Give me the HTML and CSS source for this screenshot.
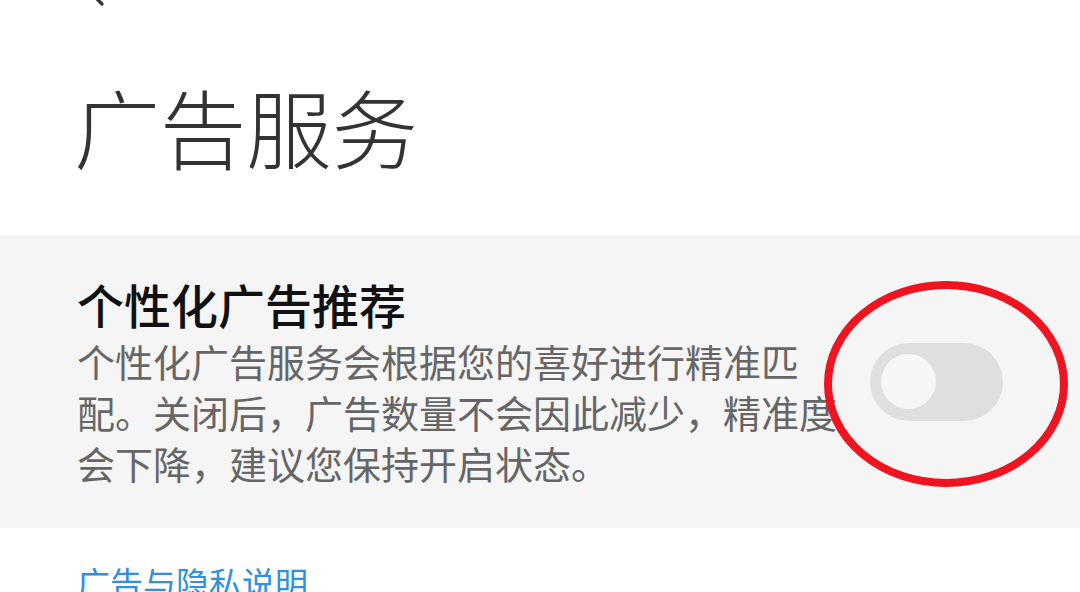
FILE: index.html
```html
<!DOCTYPE html>
<html lang="zh-CN">
<head>
<meta charset="utf-8">
<title>广告服务</title>
<link rel="stylesheet" href="styles.css">
</head>
<body>
<div class="page">
  <header class="topbar">
    <svg class="back" width="40" height="8" viewBox="0 0 40 8"><path d="M26 -14 L14 -4 L22 4" fill="none" stroke="#333" stroke-width="3.2" stroke-linecap="round" stroke-linejoin="round"/></svg>
  </header>
  <h1 class="title">广告服务</h1>
  <section class="setting">
    <div class="setting-text">
      <h2 class="setting-title">个性化广告推荐</h2>
      <p class="setting-desc">个性化广告服务会根据您的喜好进行精准匹配。关闭后，广告数量不会因此减少，精准度会下降，建议您保持开启状态。</p>
    </div>
    <div class="switch"><span class="knob"></span></div>
    <svg class="mark" width="246" height="208" viewBox="0 0 246 208"><ellipse cx="123" cy="104" rx="118" ry="99" fill="none" stroke="#ee1420" stroke-width="8"/></svg>
  </section>
  <a class="link" href="#">广告与隐私说明</a>
</div>
</body>
</html>
```
FILE: styles.css
```css
html, body {
  margin: 0;
  padding: 0;
  background: #ffffff;
}
body {
  font-family: "Noto Sans CJK SC", "Noto Sans", sans-serif;
  width: 1080px;
  height: 592px;
  overflow: hidden;
}
.page {
  display: flex;
  flex-direction: column;
}
.topbar {
  height: 8px;
  padding-left: 80px;
  display: flex;
  align-items: flex-start;
}
.back {
  display: block;
}
.title {
  margin: 0;
  padding: 75px 0 0 74px;
  height: 149px;
  box-sizing: border-box;
  font-size: 86px;
  line-height: 86px;
  font-weight: 300;
  color: #333333;
  letter-spacing: 0;
}
.setting {
  position: relative;
  margin-top: 78px;
  height: 293px;
  background: #f5f5f5;
  display: flex;
  align-items: center;
  justify-content: space-between;
  padding: 0 77px;
  box-sizing: border-box;
}
.setting-text {
  width: 770px;
  display: flex;
  flex-direction: column;
  margin-top: 0;
}
.setting-title {
  margin: 0 0 3px;
  font-size: 47px;
  line-height: 56px;
  font-weight: 500;
  color: #111111;
}
.setting-desc {
  margin: 0;
  font-size: 38px;
  line-height: 51px;
  color: #666666;
  font-weight: 400;
}
.switch {
  width: 133px;
  height: 78px;
  border-radius: 39px;
  background: #dfdfdf;
  display: flex;
  align-items: center;
  padding-left: 11px;
  box-sizing: border-box;
  flex-shrink: 0;
}
.knob {
  width: 55px;
  height: 55px;
  border-radius: 50%;
  background: #f6f6f6;
}
.mark {
  position: absolute;
  left: 823px;
  top: 45px;
}
.link {
  display: block;
  padding: 34px 0 0 77px;
  font-size: 33px;
  line-height: 40px;
  color: #2f8fe0;
  text-decoration: none;
}
```
